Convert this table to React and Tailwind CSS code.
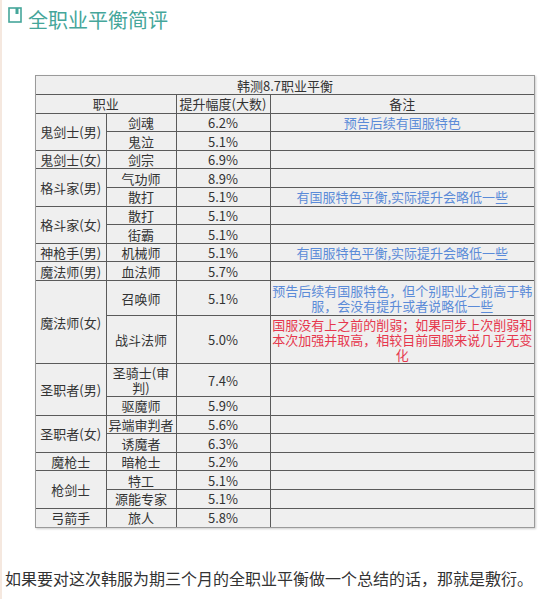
const rows = [
  { cls: '鬼剑士(男)', span: 2, job: '剑魂', pct: '6.2%', note: '预告后续有国服特色', tone: 'blue' },
  { job: '鬼泣', pct: '5.1%' },
  { cls: '鬼剑士(女)', span: 1, job: '剑宗', pct: '6.9%' },
  { cls: '格斗家(男)', span: 2, job: '气功师', pct: '8.9%' },
  { job: '散打', pct: '5.1%', note: '有国服特色平衡,实际提升会略低一些', tone: 'blue' },
  { cls: '格斗家(女)', span: 2, job: '散打', pct: '5.1%' },
  { job: '街霸', pct: '5.1%' },
  { cls: '神枪手(男)', span: 1, job: '机械师', pct: '5.1%', note: '有国服特色平衡,实际提升会略低一些', tone: 'blue' },
  { cls: '魔法师(男)', span: 1, job: '血法师', pct: '5.7%' },
  {
    cls: '魔法师(女)', span: 2, job: '召唤师', pct: '5.1%', h: 'h-[35px]',
    note: '预告后续有国服特色，但个别职业之前高于韩服，会没有提升或者说略低一些', tone: 'blue',
  },
  {
    job: '战斗法师', pct: '5.0%', h: 'h-[48px]',
    note: '国服没有上之前的削弱；如果同步上次削弱和本次加强并取高，相较目前国服来说几乎无变化', tone: 'red',
  },
  { cls: '圣职者(男)', span: 2, job: '圣骑士(审判)', pct: '7.4%', h: 'h-[33px]' },
  { job: '驱魔师', pct: '5.9%' },
  { cls: '圣职者(女)', span: 2, job: '异端审判者', pct: '5.6%' },
  { job: '诱魔者', pct: '6.3%' },
  { cls: '魔枪士', span: 1, job: '暗枪士', pct: '5.2%' },
  { cls: '枪剑士', span: 2, job: '特工', pct: '5.1%' },
  { job: '源能专家', pct: '5.1%' },
  { cls: '弓箭手', span: 1, job: '旅人', pct: '5.8%' },
]

const cell = 'border border-[#5a5a5a] px-[2px] py-0 text-center align-middle'
const noteCell = 'border border-[#5a5a5a] px-0 py-0 text-center align-middle'

function BookIcon() {
  return (
    <svg width="14" height="16" viewBox="0 0 14 16" className="mt-[1px] shrink-0">
      <rect x="1" y="1" width="12" height="14" fill="none" stroke="#45a69a" strokeWidth="1.6" />
      <rect x="7.5" y="1" width="3" height="6" fill="#45a69a" />
    </svg>
  )
}

export default function App() {
  return (
    <div
      className="min-h-[599px] bg-white border-l-2 border-[#f5e8df] text-[#333]"
      style={{ fontFamily: '"Noto Sans CJK SC", "Noto Sans", sans-serif' }}
    >
      <div className="flex items-start gap-[6px] pl-[6px] pt-[6px]">
        <BookIcon />
        <h2 className="text-[20px] leading-[28px] text-[#45a69a] font-normal">全职业平衡简评</h2>
      </div>

      <div className="ml-[33px] mt-[41px] w-[500px] border border-[#9a9a9a] bg-[#efefef] shadow-[1px_1px_2px_rgba(0,0,0,0.2)]">
        <table className="w-[498px] table-fixed border-collapse border-hidden text-[13px] leading-[15px]">
          <colgroup>
            <col className="w-[70px]" />
            <col className="w-[70px]" />
            <col className="w-[94px]" />
            <col className="w-[264px]" />
          </colgroup>
          <tbody>
            <tr className="h-[18.6px]">
              <td colSpan={4} className={cell}>韩测8.7职业平衡</td>
            </tr>
            <tr className="h-[18.6px]">
              <td colSpan={2} className={cell}>职业</td>
              <td className={cell}>提升幅度(大数)</td>
              <td className={cell}>备注</td>
            </tr>
            {rows.map((r, i) => (
              <tr key={i} className={r.h || 'h-[18.6px]'}>
                {r.cls && (
                  <td rowSpan={r.span} className={cell}>{r.cls}</td>
                )}
                <td className={cell}>{r.job}</td>
                <td className={cell}>{r.pct}</td>
                <td
                  className={`${noteCell} ${r.tone === 'red' ? 'text-[#e6374d]' : 'text-[#5b8bd8]'}`}
                >
                  {r.note || ''}
                </td>
              </tr>
            ))}
          </tbody>
        </table>
      </div>

      <p className="mt-[38px] pl-[3px] text-[16px] leading-[24px] text-[#333]">
        如果要对这次韩服为期三个月的全职业平衡做一个总结的话，那就是敷衍。
      </p>
    </div>
  )
}
